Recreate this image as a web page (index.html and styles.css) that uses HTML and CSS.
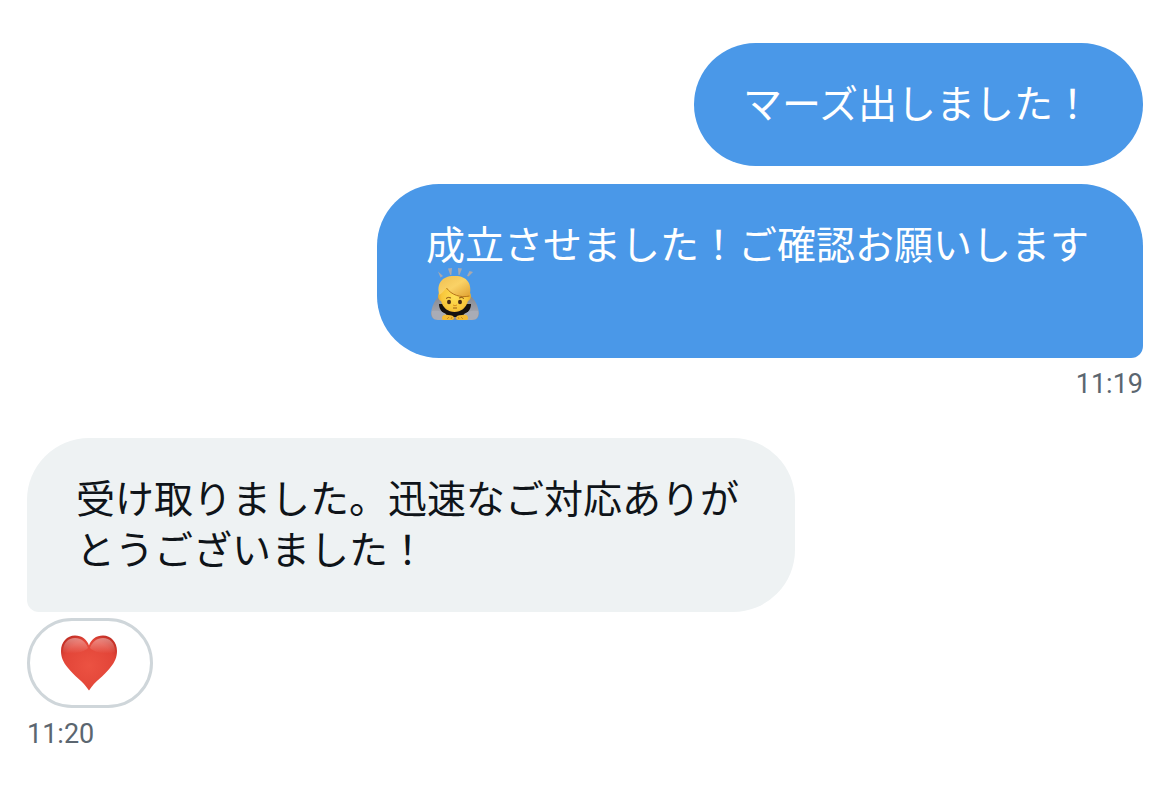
FILE: index.html
```html
<!DOCTYPE html>
<html lang="ja">
<head>
<meta charset="utf-8">
<meta name="viewport" content="width=device-width, initial-scale=1">
<title>メッセージ</title>
<link rel="stylesheet" href="styles.css">
</head>
<body>
<main class="chat">
  <section class="group group-sent">
    <p class="bubble">マーズ出しました！</p>
    <p class="bubble bubble-last">成立させました！ご確認お願いします<svg class="emoji-bow" viewBox="0 0 50 54" role="img" aria-label="お辞儀">
      <defs>
        <radialGradient id="face" cx="50%" cy="55%" r="60%">
          <stop offset="0" stop-color="#ffdf55"/><stop offset=".65" stop-color="#f8c63a"/><stop offset="1" stop-color="#dc971f"/>
        </radialGradient>
        <linearGradient id="hair" x1="0" y1="0" x2="1" y2="1">
          <stop offset="0" stop-color="#efbf50"/><stop offset=".5" stop-color="#fad266"/><stop offset="1" stop-color="#e0a030"/>
        </linearGradient>
        <linearGradient id="sleeve" x1="0" y1="0" x2="0" y2="1">
          <stop offset="0" stop-color="#85888f"/><stop offset=".65" stop-color="#a0a3ad"/><stop offset="1" stop-color="#858893"/>
        </linearGradient>
      </defs>
      <g fill="#aaa9ad"><path d="M8 4.500l5 4.500-2.500 1.500z"/><path d="M18 1.500l4-.5-.7 7h-1z"/><path d="M28 1l4 .5-2.500 6.500h-1z"/><path d="M43 5l-3.500-1-2.500 5 1.500.5z"/></g>
      <path d="M10 29C5 32 2 39 1 46c-.3 5 3 7 9 7h30c6 0 9-2 9-7-1-7-4-14-9-17z" fill="url(#sleeve)"/>
      <path d="M9 37c0 4 2 8 6 10l5 3h10l5-3c4-2 6-6 6-10z" fill="#151110"/>
      <path d="M2 44c5-1 10 0 14 3v6H8c-5 0-7-3-6-9zM48 44c-5-1-10 0-14 3v6h8c5 0 7-3 6-9z" fill="#a9acb6"/>
      <path d="M9.500 25c-2.500 3-1.500 8 1.500 9 2 7 7 11 13.500 11S36 41 38 34c3-1 4-6 1.500-9C39 15 33 11 24.500 11S10 15 9.500 25z" fill="url(#face)"/>
      <path d="M9.500 28C6 17 12 9 23.500 9 36 8 43 16 39.500 29c-9 2-18-1-23-8-2 2-4 5-7 7z" fill="url(#hair)"/>
      <path d="M16.500 21c5 7 14 10 23 8" fill="none" stroke="#b77519" stroke-width="1"/>
      <path d="M16 31.500q2-2 5-.5M29 31q3-1.500 5 .5" fill="none" stroke="#875015" stroke-width="1"/>
      <ellipse cx="19" cy="35" rx="2" ry="2.300" fill="#482b16"/><ellipse cx="30" cy="35" rx="2" ry="2.300" fill="#482b16"/>
      <path d="M23 38q2 1.500 4 0" stroke="#d98e1d" fill="none"/><path d="M23 41h4" stroke="#9b5d17" stroke-width="1"/>
      <path d="M12 51c0-3 3-4 6-3 4 0 6 1 6 3 0 2-2 2-4 2h-5c-2 0-3 0-3-2zM26 51c0-2 2-3 6-3 4-1 6 0 6 3 0 2-1 2-3 2h-5c-2 0-4 0-4-2z" fill="#f3ba32"/>
      <path d="M17 52l2-2M21 52l1-2M29 52l-1-2M33 52l-2-2" stroke="#b97a16" stroke-width=".7"/>
    </svg></p>
    <time class="stamp" datetime="11:19">11:19</time>
  </section>

  <section class="group group-received">
    <p class="bubble bubble-last">受け取りました。迅速なご対応ありがとうございました！</p>
    <button class="reaction" type="button" aria-label="ハート">
      <svg class="heart" viewBox="0 0 58 56" aria-hidden="true">
        <defs>
          <radialGradient id="heart-fill" cx="50%" cy="55%" r="66%">
            <stop offset="0" stop-color="#ec5242"/><stop offset=".7" stop-color="#e24538"/><stop offset="1" stop-color="#bd2b22"/>
          </radialGradient>
          <linearGradient id="heart-shine" x1="0" y1="0" x2="0" y2="1">
            <stop offset="0" stop-color="#fff" stop-opacity=".4"/><stop offset="1" stop-color="#fff" stop-opacity="0"/>
          </linearGradient>
        </defs>
        <path d="M29 55.500C23 46 14 41 8 33 3 27 1 22 1 16 1 7 7 .5 15 .5c7 0 12 4 14 10 2-6 7-10 14-10 8 0 14 6.500 14 15.500 0 6-2 11-7 17-6 8-15 13-21 22.500z" fill="url(#heart-fill)"/>
        <path d="M3 17C3 8 8 3 15 3c6 0 11 4 13 10-5 5-18 7-25 4zM55 17C55 8 50 3 43 3c-6 0-11 4-13 10 5 5 18 7 25 4z" fill="url(#heart-shine)"/>
      </svg>
    </button>
    <time class="stamp" datetime="11:20">11:20</time>
  </section>
</main>
</body>
</html>
```
FILE: styles.css
```css
* {
  box-sizing: border-box;
}

body {
  margin: 0;
  background: #fff;
  font-family: "Noto Sans CJK JP", sans-serif;
}

.chat {
  display: flex;
  flex-direction: column;
  gap: 38px;
  padding: 43px 27px;
}

.group {
  display: flex;
  flex-direction: column;
}

.group-sent {
  align-items: flex-end;
}

.group-received {
  align-items: flex-start;
}

.bubble {
  max-width: calc(100% - 350px);
  margin: 0;
  padding: 33px 51px 39px 49px;
  border-radius: 62px;
  font-size: 39px;
  line-height: 51px;
}

.bubble + .bubble {
  margin-top: 18px;
}

.group-sent .bubble {
  background: #4a98e8;
  color: #fff;
}

.group-sent .bubble-last {
  border-bottom-right-radius: 12px;
}

.group-received .bubble {
  max-width: calc(100% - 348px);
  background: #eef2f3;
  color: #0f1419;
}

.group-received .bubble-last {
  border-bottom-left-radius: 12px;
}

.emoji-bow {
  width: 50px;
  height: 54px;
  margin: -12px 4px -2px;
  vertical-align: middle;
}

.reaction {
  display: flex;
  align-items: center;
  justify-content: center;
  margin: 6px 0 0;
  padding: 14px 32px 14px 30px;
  border: 3px solid #cfd6da;
  border-radius: 45px;
  background: #fff;
}

.heart {
  display: block;
  width: 58px;
  height: 56px;
}

.stamp {
  margin-top: 10px;
  color: #5b6670;
  font-family: Roboto, sans-serif;
  font-size: 27px;
  line-height: 32px;
}
```
